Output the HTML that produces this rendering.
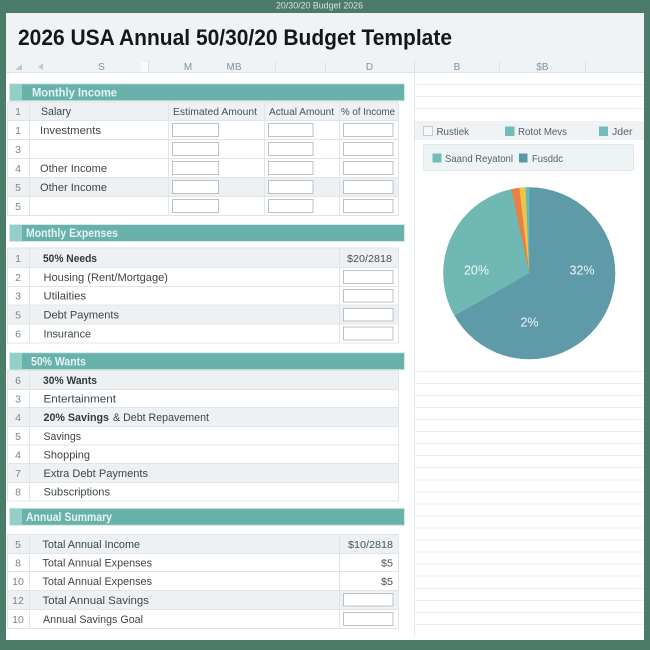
<!DOCTYPE html>
<html lang="en">
<head>
<meta charset="utf-8">
<title>2026 USA Annual 50/30/20 Budget Template</title>
<style>
html,body{margin:0;padding:0;background:#4a7c69;}
svg{display:block;}
text{font-family:"Liberation Sans",sans-serif;}
.t{font-size:11px;fill:#3f4548;}
.b{font-size:11px;font-weight:bold;fill:#33383b;}
.n{font-size:10.5px;fill:#7c8487;text-anchor:middle;}
.h{font-size:10.5px;fill:#4b5154;}
.s{font-size:11.5px;font-weight:bold;fill:#e4f3f1;}
.c{font-size:10px;fill:#8a9296;text-anchor:middle;}
.l{font-size:10.5px;fill:#596166;}
.p{font-size:12.5px;fill:#eef6f6;text-anchor:middle;}
.bar{fill:#69b2ab;stroke:#d3e9e6;stroke-width:1;}
.sq{fill:#93cfc7;}
.sh{fill:#edf1f3;}
.i{fill:#fff;stroke:#bcc2c4;stroke-width:1;}
.g{stroke:#e0e6e8;stroke-width:1;fill:none;}
.r{stroke:#e8eeef;stroke-width:1;fill:none;}
</style>
</head>
<body>
<svg xmlns="http://www.w3.org/2000/svg" width="650" height="650" viewBox="0 0 650 650">
<rect width="650" height="650" fill="#4a7c69"/>
<text x="276" y="8.5" font-size="9" fill="#d5e4dd" textLength="87" lengthAdjust="spacingAndGlyphs">20/30/20 Budget 2026</text>

<rect x="6" y="13" width="638" height="627" fill="#fff"/>
<rect x="6" y="13" width="638" height="59" fill="#f0f3f5"/>
<line x1="6" y1="72.5" x2="644" y2="72.5" stroke="#dde3e6"/>
<text x="18" y="45" font-size="22" font-weight="bold" fill="#14171a" textLength="434" lengthAdjust="spacingAndGlyphs">2026 USA Annual 50/30/20 Budget Template</text>

<polygon points="15,70 22,64 22,70" fill="#c3c9cc"/>
<polygon points="38,67 43,63 43,70" fill="#c3c9cc"/>
<rect x="141" y="62" width="7" height="10" fill="#f9fbfb"/>
<g stroke="#dce2e5"><line x1="148.500" y1="60" x2="148.500" y2="72"/><line x1="232" y1="62" x2="232" y2="72"/><line x1="275.500" y1="62" x2="275.500" y2="72"/><line x1="325.500" y1="62" x2="325.500" y2="72"/><line x1="414.500" y1="60" x2="414.500" y2="72"/><line x1="499.500" y1="62" x2="499.500" y2="72"/><line x1="585.500" y1="62" x2="585.500" y2="72"/></g>
<text class="c" x="101.500" y="70">S</text>
<text class="c" x="188" y="70">M</text>
<text class="c" x="234" y="70">MB</text>
<text class="c" x="369.500" y="70">D</text>
<text class="c" x="457" y="70">B</text>
<text class="c" x="542.500" y="70">$B</text>

<!-- Monthly Income -->
<rect class="bar" x="9.500" y="83.800" width="395" height="17"/>
<rect class="sq" x="10" y="84.300" width="12" height="16"/>
<text class="s" x="32" y="96.500" textLength="85" lengthAdjust="spacingAndGlyphs">Monthly Income</text>

<rect class="sh" x="7.500" y="102" width="391" height="18.500"/>
<rect class="sh" x="7.500" y="177.500" width="391" height="19"/>
<g class="g">
<rect x="7.500" y="102" width="391" height="113.500"/>
<line x1="7.500" y1="120.500" x2="398.500" y2="120.500"/>
<line x1="7.500" y1="139.500" x2="398.500" y2="139.500"/>
<line x1="7.500" y1="158.500" x2="398.500" y2="158.500"/>
<line x1="7.500" y1="177.500" x2="398.500" y2="177.500"/>
<line x1="7.500" y1="196.500" x2="398.500" y2="196.500"/>
<line x1="29.500" y1="102" x2="29.500" y2="215.500"/>
<line x1="168.500" y1="102" x2="168.500" y2="215.500"/>
<line x1="264.500" y1="102" x2="264.500" y2="215.500"/>
<line x1="339.500" y1="102" x2="339.500" y2="215.500"/>
</g>
<text class="n" x="18" y="115">1</text><text class="n" x="18" y="134">1</text><text class="n" x="18" y="153">3</text><text class="n" x="18" y="172">4</text><text class="n" x="18" y="191">5</text><text class="n" x="18" y="210">5</text>
<text class="t" x="41" y="115" textLength="30" lengthAdjust="spacingAndGlyphs">Salary</text>
<text class="h" x="173" y="115" textLength="84" lengthAdjust="spacingAndGlyphs">Estimated Amount</text>
<text class="h" x="269" y="115" textLength="65" lengthAdjust="spacingAndGlyphs">Actual Amount</text>
<text class="h" x="341" y="115" textLength="54" lengthAdjust="spacingAndGlyphs">% of Income</text>
<text class="t" x="40" y="134" textLength="61" lengthAdjust="spacingAndGlyphs">Investments</text>
<text class="t" x="40" y="172" textLength="67" lengthAdjust="spacingAndGlyphs">Other Income</text>
<text class="t" x="40" y="191" textLength="67" lengthAdjust="spacingAndGlyphs">Other Income</text>

<rect class="i" x="172.500" y="123.500" width="46" height="13"/><rect class="i" x="268.500" y="123.500" width="44.500" height="13"/><rect class="i" x="343.500" y="123.500" width="49.500" height="13"/>
<rect class="i" x="172.500" y="142.500" width="46" height="13"/><rect class="i" x="268.500" y="142.500" width="44.500" height="13"/><rect class="i" x="343.500" y="142.500" width="49.500" height="13"/>
<rect class="i" x="172.500" y="161.500" width="46" height="13"/><rect class="i" x="268.500" y="161.500" width="44.500" height="13"/><rect class="i" x="343.500" y="161.500" width="49.500" height="13"/>
<rect class="i" x="172.500" y="180.500" width="46" height="13"/><rect class="i" x="268.500" y="180.500" width="44.500" height="13"/><rect class="i" x="343.500" y="180.500" width="49.500" height="13"/>
<rect class="i" x="172.500" y="199.500" width="46" height="13"/><rect class="i" x="268.500" y="199.500" width="44.500" height="13"/><rect class="i" x="343.500" y="199.500" width="49.500" height="13"/>

<!-- Monthly Expenses -->
<rect class="bar" x="9.500" y="224.500" width="395" height="17"/>
<rect class="sq" x="10" y="225" width="12" height="16"/>
<text class="s" x="26" y="237" textLength="92" lengthAdjust="spacingAndGlyphs">Monthly Expenses</text>

<rect class="sh" x="7.500" y="248" width="391" height="19.500"/>
<rect class="sh" x="7.500" y="305" width="391" height="19"/>
<g class="g">
<rect x="7.500" y="248" width="391" height="95"/>
<line x1="7.500" y1="267.500" x2="398.500" y2="267.500"/>
<line x1="7.500" y1="286.500" x2="398.500" y2="286.500"/>
<line x1="7.500" y1="305" x2="398.500" y2="305"/>
<line x1="7.500" y1="324" x2="398.500" y2="324"/>
<line x1="29.500" y1="248" x2="29.500" y2="343"/>
<line x1="339.500" y1="248" x2="339.500" y2="343"/>
</g>
<text class="n" x="18" y="262">1</text><text class="n" x="18" y="281">2</text><text class="n" x="18" y="299.500">3</text><text class="n" x="18" y="318.500">5</text><text class="n" x="18" y="337.500">6</text>
<text class="b" x="43" y="262" textLength="54" lengthAdjust="spacingAndGlyphs">50% Needs</text>
<text class="h" x="347" y="262" textLength="45" lengthAdjust="spacingAndGlyphs">$20/2818</text>
<text class="t" x="43.500" y="281" textLength="124.500" lengthAdjust="spacingAndGlyphs">Housing (Rent/Mortgage)</text>
<text class="t" x="43.500" y="299.500" textLength="42.500" lengthAdjust="spacingAndGlyphs">Utilaities</text>
<text class="t" x="43.500" y="318.500" textLength="75.500" lengthAdjust="spacingAndGlyphs">Debt Payments</text>
<text class="t" x="43.500" y="337.500" textLength="47.500" lengthAdjust="spacingAndGlyphs">Insurance</text>
<rect class="i" x="343.500" y="270.500" width="49.500" height="13"/>
<rect class="i" x="343.500" y="289.500" width="49.500" height="12.500"/>
<rect class="i" x="343.500" y="308.500" width="49.500" height="12.500"/>
<rect class="i" x="343.500" y="327" width="49.500" height="13"/>

<!-- 50% Wants -->
<rect class="sh" x="7.500" y="370.500" width="391" height="19"/>
<rect class="sh" x="7.500" y="407.500" width="391" height="19"/>
<rect class="sh" x="7.500" y="463.500" width="391" height="19"/>
<g class="g">
<rect x="7.500" y="370.500" width="391" height="130.500"/>
<line x1="7.500" y1="389.500" x2="398.500" y2="389.500"/>
<line x1="7.500" y1="407.500" x2="398.500" y2="407.500"/>
<line x1="7.500" y1="426.500" x2="398.500" y2="426.500"/>
<line x1="7.500" y1="445" x2="398.500" y2="445"/>
<line x1="7.500" y1="463.500" x2="398.500" y2="463.500"/>
<line x1="7.500" y1="482.500" x2="398.500" y2="482.500"/>
<line x1="29.500" y1="370.500" x2="29.500" y2="501"/>
</g>
<rect class="bar" x="9.500" y="352.700" width="395" height="17"/>
<rect class="sq" x="10" y="353.200" width="12" height="16"/>
<text class="s" x="31" y="365.500" textLength="55" lengthAdjust="spacingAndGlyphs">50% Wants</text>
<text class="n" x="18" y="384">6</text><text class="n" x="18" y="402.500">3</text><text class="n" x="18" y="421">4</text><text class="n" x="18" y="440">5</text><text class="n" x="18" y="458.500">4</text><text class="n" x="18" y="477">7</text><text class="n" x="18" y="495.500">8</text>
<text class="b" x="43" y="384" textLength="54" lengthAdjust="spacingAndGlyphs">30% Wants</text>
<text class="t" x="43.500" y="402.500" textLength="72.500" lengthAdjust="spacingAndGlyphs">Entertainment</text>
<text class="b" x="43.500" y="421" textLength="65.500" lengthAdjust="spacingAndGlyphs">20% Savings</text>
<text class="t" x="113" y="421" textLength="96" lengthAdjust="spacingAndGlyphs">&amp; Debt Repavement</text>
<text class="t" x="43.500" y="440" textLength="37.500" lengthAdjust="spacingAndGlyphs">Savings</text>
<text class="t" x="43.500" y="458.500" textLength="46.500" lengthAdjust="spacingAndGlyphs">Shopping</text>
<text class="t" x="43.500" y="477" textLength="104.500" lengthAdjust="spacingAndGlyphs">Extra Debt Payments</text>
<text class="t" x="43.500" y="495.500" textLength="66.500" lengthAdjust="spacingAndGlyphs">Subscriptions</text>

<!-- Annual Summary -->
<rect class="bar" x="9.500" y="508.300" width="395" height="17"/>
<rect class="sq" x="10" y="508.800" width="12" height="16"/>
<text class="s" x="26" y="521" textLength="86" lengthAdjust="spacingAndGlyphs">Annual Summary</text>

<rect class="sh" x="7.500" y="534.500" width="391" height="19"/>
<rect class="sh" x="7.500" y="590.500" width="391" height="19"/>
<g class="g">
<rect x="7.500" y="534.500" width="391" height="94"/>
<line x1="7.500" y1="553.500" x2="398.500" y2="553.500"/>
<line x1="7.500" y1="571.500" x2="398.500" y2="571.500"/>
<line x1="7.500" y1="590.500" x2="398.500" y2="590.500"/>
<line x1="7.500" y1="609.500" x2="398.500" y2="609.500"/>
<line x1="29.500" y1="534.500" x2="29.500" y2="628.500"/>
<line x1="339.500" y1="534.500" x2="339.500" y2="628.500"/>
</g>
<text class="n" x="18" y="548">5</text><text class="n" x="18" y="566.500">8</text><text class="n" x="18" y="585">10</text><text class="n" x="18" y="604">12</text><text class="n" x="18" y="623">10</text>
<text class="t" x="42.500" y="548" textLength="97.500" lengthAdjust="spacingAndGlyphs">Total Annual Income</text>
<text class="t" x="42.500" y="566.500" textLength="109.500" lengthAdjust="spacingAndGlyphs">Total Annual Expenses</text>
<text class="t" x="42.500" y="585" textLength="109.500" lengthAdjust="spacingAndGlyphs">Total Annual Expenses</text>
<text class="t" x="42.500" y="604" textLength="106.500" lengthAdjust="spacingAndGlyphs">Total Annual Savings</text>
<text class="t" x="43" y="623" textLength="100" lengthAdjust="spacingAndGlyphs">Annual Savings Goal</text>
<text class="h" x="348" y="548" textLength="45" lengthAdjust="spacingAndGlyphs">$10/2818</text>
<text class="h" x="381" y="566.500" textLength="12" lengthAdjust="spacingAndGlyphs">$5</text>
<text class="h" x="381" y="585" textLength="12" lengthAdjust="spacingAndGlyphs">$5</text>
<rect class="i" x="343.500" y="593.500" width="49.500" height="12.500"/>
<rect class="i" x="343.500" y="612.500" width="49.500" height="13"/>

<!-- Right panel -->
<line x1="414.500" y1="72" x2="414.500" y2="636" stroke="#e3e9ea"/>
<g class="r">
<line x1="415" y1="84.500" x2="644" y2="84.500"/>
<line x1="415" y1="96.500" x2="644" y2="96.500"/>
<line x1="415" y1="108.500" x2="644" y2="108.500"/>
</g>
<rect x="415" y="121" width="229" height="19" fill="#eef2f4"/>
<rect x="423.500" y="126.500" width="9" height="9" fill="#f5f7f8" stroke="#c6ccce"/>
<text class="l" x="436.500" y="135" textLength="32.500" lengthAdjust="spacingAndGlyphs">Rustiek</text>
<rect x="505" y="126.500" width="9.500" height="9.500" fill="#72bdb9"/>
<text class="l" x="518" y="135" textLength="49" lengthAdjust="spacingAndGlyphs">Rotot Mevs</text>
<rect x="599" y="126.500" width="9" height="9.500" fill="#72bdb9"/>
<text class="l" x="612" y="135" textLength="20.500" lengthAdjust="spacingAndGlyphs">Jder</text>

<rect x="423.500" y="144.500" width="210" height="26" rx="1.500" fill="#eef3f5" stroke="#e2e8ea"/>
<rect x="432.500" y="153.500" width="9" height="9" fill="#72bdb9"/>
<text class="l" x="445" y="162" textLength="68" lengthAdjust="spacingAndGlyphs">Saand Reyatonl</text>
<rect x="519" y="153.500" width="8.500" height="9" fill="#5a98a6"/>
<text class="l" x="532" y="162" textLength="31" lengthAdjust="spacingAndGlyphs">Fusddc</text>

<!-- Pie -->
<circle cx="529.300" cy="273.300" r="86" fill="#5f9aa9"/>
<path d="M529.300 273.300 L454.500 315.800 A86 86 0 0 1 511.500 189.200 Z" fill="#70b8b3"/>
<path d="M529.300 273.300 L511.500 189.200 A86 86 0 0 1 519.300 187.900 Z" fill="#ed7f43"/>
<path d="M529.300 273.300 L519.300 187.900 A86 86 0 0 1 525.700 187.400 Z" fill="#f0c544"/>
<path d="M529.300 273.300 L525.700 187.400 A86 86 0 0 1 529.300 187.300 Z" fill="#5cbcc0"/>
<text class="p" x="476.500" y="274.500">20%</text>
<text class="p" x="582" y="274.500">32%</text>
<text class="p" x="529.500" y="326.500">2%</text>

<g class="r">
<line x1="415" y1="371.500" x2="644" y2="371.500"/>
<line x1="415" y1="383.500" x2="644" y2="383.500"/>
<line x1="415" y1="395.500" x2="644" y2="395.500"/>
<line x1="415" y1="407.500" x2="644" y2="407.500"/>
<line x1="415" y1="419.500" x2="644" y2="419.500"/>
<line x1="415" y1="431.500" x2="644" y2="431.500"/>
<line x1="415" y1="443.500" x2="644" y2="443.500"/>
<line x1="415" y1="455.500" x2="644" y2="455.500"/>
<line x1="415" y1="467.500" x2="644" y2="467.500"/>
<line x1="415" y1="480" x2="644" y2="480"/>
<line x1="415" y1="492" x2="644" y2="492"/>
<line x1="415" y1="504" x2="644" y2="504"/>
<line x1="415" y1="516" x2="644" y2="516"/>
<line x1="415" y1="528" x2="644" y2="528"/>
<line x1="415" y1="540" x2="644" y2="540"/>
<line x1="415" y1="552" x2="644" y2="552"/>
<line x1="415" y1="564" x2="644" y2="564"/>
<line x1="415" y1="576" x2="644" y2="576"/>
<line x1="415" y1="588.500" x2="644" y2="588.500"/>
<line x1="415" y1="600.500" x2="644" y2="600.500"/>
<line x1="415" y1="612.500" x2="644" y2="612.500"/>
<line x1="415" y1="624.500" x2="644" y2="624.500"/>
</g>
</svg>
</body>
</html>
